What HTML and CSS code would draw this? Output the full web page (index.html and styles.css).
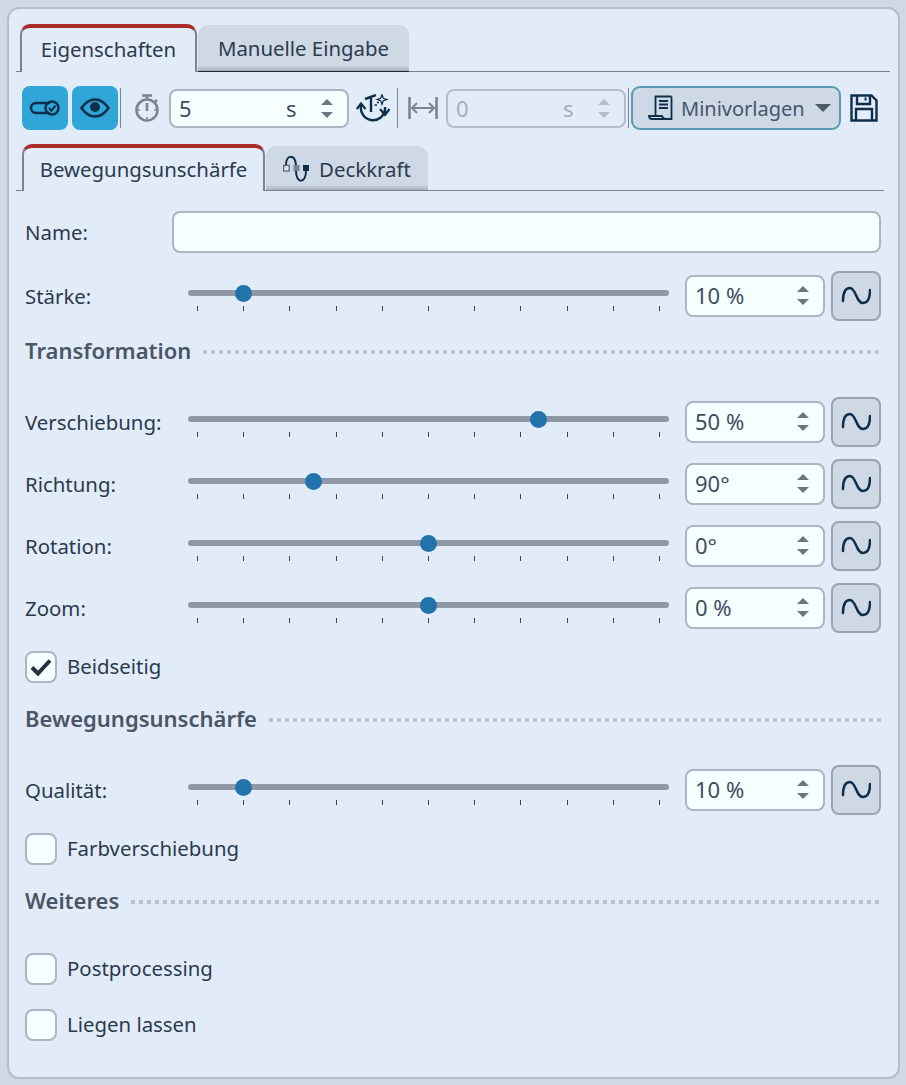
FILE: index.html
```html
<!DOCTYPE html>
<html lang="de">
<head>
<meta charset="utf-8">
<title>Eigenschaften</title>
<link rel="stylesheet" href="styles.css">
</head>
<body>
<main class="panel">
  <div class="tabbar main-tabs">
    <div class="tab active">Eigenschaften</div>
    <div class="tab second">Manuelle Eingabe</div>
  </div>

  <div class="toolbar">
    <button class="tool blue"><svg width="34" height="20" viewBox="0 0 34 20" fill="none" stroke="#0d2f4b" stroke-width="2.4"><path d="M22 5H8a5 5 0 0 0 0 10h14"/><circle cx="24" cy="10" r="6.5"/><path d="M21 10l2.4 2.6 4-5" stroke-width="2"/></svg></button>
    <button class="tool blue"><svg width="30" height="20" viewBox="0 0 30 20"><path d="M1.5 10C6 3.5 10 1.5 15 1.5S24 3.5 28.500 10C24 16.500 20 18.500 15 18.500S6 16.500 1.500 10Z" fill="none" stroke="#0d2f4b" stroke-width="2.600"/><circle cx="15" cy="9" r="5" fill="#0d2f4b"/></svg></button>
    <span class="sep first"></span>
    <svg class="ic watch" width="26" height="28" viewBox="0 0 26 28" fill="none" stroke="#7b848d" stroke-width="2.600"><path d="M8 1.500h10M13 1.500v4M21 6l2 2"/><circle cx="13" cy="16" r="10.500"/><path d="M13 9v8" stroke-width="2.600"/><path d="M13 23v2M4 16h2M20 16h2" stroke-width="1.600"/></svg>
    <div class="spin tool-spin"><span class="val">5</span><span class="unit">s</span><span class="arrows"><i class="up"></i><i class="down"></i></span></div>
    <svg class="ic smart" width="34" height="28" viewBox="0 0 34 28" fill="none" stroke="#0d2f4b" stroke-width="2.400"><path d="M5 12A12 12 0 0 0 29 16"/><path d="M.8 15L5 9.500 9.500 15M24 15l5 6 4.500-6" stroke-width="2.200"/><path d="M5 9.500V12M29 13v8M9 5l11-4M15 3v15"/><path d="M26 .5l1.300 3.700 3.700 1.300-3.700 1.300L26 10.500l-1.300-3.700-3.700-1.300 3.700-1.300z" stroke-width="1.200"/><path d="M18.500 11h2.500M21 8.500h2" stroke-width="1.400"/></svg>
    <span class="sep second-sep"></span>
    <svg class="ic stretch" width="30" height="24" viewBox="0 0 30 24" fill="none" stroke="#7b848d" stroke-width="2"><path d="M1.500 1v22M28.500 1v22" stroke-width="2.600"/><path d="M4 12h22M9 7l-5 5 5 5M21 7l5 5-5 5"/></svg>
    <div class="spin tool-spin disabled"><span class="val">0</span><span class="unit">s</span><span class="arrows"><i class="up"></i><i class="down"></i></span></div>
    <span class="sep third-sep"></span>
    <button class="mini">
      <svg width="26" height="26" viewBox="0 0 26 26" fill="none" stroke="#0d2f4b" stroke-width="1.800"><path d="M23.500 1.500H7.500V20M23.500 1.500V24H18"/><path d="M11 6h9M11 9.500h9M11 13h9" stroke-width="2"/><path d="M1 21h13c.5 2 1.500 3 4 3H4c-2 0-3-1-3-3Z"/></svg>
      <span>Minivorlagen</span><i class="caret"></i>
    </button>
    <svg class="ic save" width="28" height="28" viewBox="0 0 28 28" fill="none" stroke="#0d2f4b" stroke-width="2.400"><path d="M1.500 1.500h20l5 5v20h-25z"/><path d="M7 1.500V10h13V1.500M6 26.500V15h16v11.500"/><path d="M15.500 3.500v3" stroke-width="2"/></svg>
  </div>

  <div class="tabbar sub-tabs">
    <div class="tab active">Bewegungsunschärfe</div>
    <div class="tab second"><svg width="27" height="28" viewBox="0 0 27 28" fill="none" stroke="#0d2f4b" stroke-width="2"><path d="M3 10C3-1 12-1 13 10v6c0 13 10 13 10 0"/><rect x=".7" y="10.500" width="5.500" height="5.500" fill="#e2ecf9" stroke="#5c6670" stroke-width="1.300"/><rect x="10.500" y="10" width="6" height="6" fill="#7b848d" stroke="none"/><rect x="20" y="10" width="6" height="6" fill="#0d2f4b" stroke="none"/></svg>Deckkraft</div>
  </div>

  <div class="row name-row"><label class="label">Name:</label><div class="text-input"></div></div>

  <div class="row slider-row first-slider">
    <label class="label">Stärke:</label>
    <div class="slider"><div class="track"><span class="thumb" style="left:11.6%"></span></div><div class="ticks"><i></i><i></i><i></i><i></i><i></i><i></i><i></i><i></i><i></i><i></i><i></i></div></div>
    <div class="spin"><span class="val">10 %</span><span class="arrows"><i class="up"></i><i class="down"></i></span></div>
    <button class="curve"><svg width="30" height="20" viewBox="0 0 30 20" fill="none" stroke="#0d2f4b" stroke-width="2.500" stroke-linecap="round"><path d="M2 15C2 6 5 2 9 2c6 0 6 15 13 15 4 0 7-4 7-13"/></svg></button>
  </div>

  <div class="heading h-trans"><span>Transformation</span><em></em></div>

  <div class="row slider-row after-heading">
    <label class="label">Verschiebung:</label>
    <div class="slider"><div class="track"><span class="thumb" style="left:72.8%"></span></div><div class="ticks"><i></i><i></i><i></i><i></i><i></i><i></i><i></i><i></i><i></i><i></i><i></i></div></div>
    <div class="spin"><span class="val">50 %</span><span class="arrows"><i class="up"></i><i class="down"></i></span></div>
    <button class="curve"><svg width="30" height="20" viewBox="0 0 30 20" fill="none" stroke="#0d2f4b" stroke-width="2.500" stroke-linecap="round"><path d="M2 15C2 6 5 2 9 2c6 0 6 15 13 15 4 0 7-4 7-13"/></svg></button>
  </div>
  <div class="row slider-row">
    <label class="label">Richtung:</label>
    <div class="slider"><div class="track"><span class="thumb" style="left:26%"></span></div><div class="ticks"><i></i><i></i><i></i><i></i><i></i><i></i><i></i><i></i><i></i><i></i><i></i></div></div>
    <div class="spin"><span class="val">90°</span><span class="arrows"><i class="up"></i><i class="down"></i></span></div>
    <button class="curve"><svg width="30" height="20" viewBox="0 0 30 20" fill="none" stroke="#0d2f4b" stroke-width="2.500" stroke-linecap="round"><path d="M2 15C2 6 5 2 9 2c6 0 6 15 13 15 4 0 7-4 7-13"/></svg></button>
  </div>
  <div class="row slider-row">
    <label class="label">Rotation:</label>
    <div class="slider"><div class="track"><span class="thumb" style="left:50.1%"></span></div><div class="ticks"><i></i><i></i><i></i><i></i><i></i><i></i><i></i><i></i><i></i><i></i><i></i></div></div>
    <div class="spin"><span class="val">0°</span><span class="arrows"><i class="up"></i><i class="down"></i></span></div>
    <button class="curve"><svg width="30" height="20" viewBox="0 0 30 20" fill="none" stroke="#0d2f4b" stroke-width="2.500" stroke-linecap="round"><path d="M2 15C2 6 5 2 9 2c6 0 6 15 13 15 4 0 7-4 7-13"/></svg></button>
  </div>
  <div class="row slider-row">
    <label class="label">Zoom:</label>
    <div class="slider"><div class="track"><span class="thumb" style="left:50.1%"></span></div><div class="ticks"><i></i><i></i><i></i><i></i><i></i><i></i><i></i><i></i><i></i><i></i><i></i></div></div>
    <div class="spin"><span class="val">0 %</span><span class="arrows"><i class="up"></i><i class="down"></i></span></div>
    <button class="curve"><svg width="30" height="20" viewBox="0 0 30 20" fill="none" stroke="#0d2f4b" stroke-width="2.500" stroke-linecap="round"><path d="M2 15C2 6 5 2 9 2c6 0 6 15 13 15 4 0 7-4 7-13"/></svg></button>
  </div>

  <div class="check c-beid"><span class="box"><svg width="22" height="18" viewBox="0 0 22 18" fill="none" stroke="#26303d" stroke-width="4"><path d="M2 9.500l6 6L20 2.500"/></svg></span><span class="check-text">Beidseitig</span></div>

  <div class="heading h-bew"><span>Bewegungsunschärfe</span><em></em></div>

  <div class="row slider-row after-heading">
    <label class="label">Qualität:</label>
    <div class="slider"><div class="track"><span class="thumb" style="left:11.6%"></span></div><div class="ticks"><i></i><i></i><i></i><i></i><i></i><i></i><i></i><i></i><i></i><i></i><i></i></div></div>
    <div class="spin"><span class="val">10 %</span><span class="arrows"><i class="up"></i><i class="down"></i></span></div>
    <button class="curve"><svg width="30" height="20" viewBox="0 0 30 20" fill="none" stroke="#0d2f4b" stroke-width="2.500" stroke-linecap="round"><path d="M2 15C2 6 5 2 9 2c6 0 6 15 13 15 4 0 7-4 7-13"/></svg></button>
  </div>

  <div class="check c-farb"><span class="box"></span><span class="check-text">Farbverschiebung</span></div>

  <div class="heading h-wei"><span>Weiteres</span><em></em></div>

  <div class="check c-post"><span class="box"></span><span class="check-text">Postprocessing</span></div>
  <div class="check c-lieg"><span class="box"></span><span class="check-text">Liegen lassen</span></div>
</main>
</body>
</html>
```

FILE: styles.css
```css
* { box-sizing: border-box; }
html, body { margin: 0; height: 100%; }
body {
  background: #cfd9e5;
  padding: 7px;
  font-family: "Noto Sans", "Open Sans", sans-serif;
  font-size: 20.4px;
  color: #2b3a4e;
  width: 906px;
  height: 1085px;
  overflow: hidden;
}
button { font: inherit; color: inherit; padding: 0; }
.panel {
  width: 893px;
  height: 1072px;
  background: #e2ecf9;
  border: 2px solid #b5bfcb;
  border-radius: 12px;
  padding: 15px 8px 0 7px;
  display: flex;
  flex-direction: column;
}
.tabbar {
  display: flex;
  align-items: flex-end;
  border-bottom: 1px solid #7b8591;
}
.main-tabs { height: 48px; padding-left: 4px; }
.sub-tabs { height: 47px; margin: 14px 6px 0 0; padding-left: 6px; }
.tab {
  display: flex;
  align-items: center;
  justify-content: center;
  border-radius: 10px 10px 0 0;
  white-space: nowrap;
  margin-bottom: -1px;
}
.tab.active {
  background: #e2ecf9;
  border: 2px solid #7b8591;
  border-top: 4px solid #ad2b2b;
  border-bottom: 0;
}
.tab.second {
  background: linear-gradient(#cfd9e5 88%, #a6b0bc 100%);
  border-bottom: 1px solid #1d2833;
  margin-left: 1px;
}
.main-tabs .active { width: 177px; height: 48px; padding-bottom: 3px; }
.main-tabs .second { width: 211px; height: 47px; }
.sub-tabs .active { width: 243px; height: 47px; padding-bottom: 1px; }
.sub-tabs .second { width: 162px; height: 45px; padding-top: 2px; gap: 9px; border-bottom-color: #7b8591; }
.toolbar {
  display: flex;
  align-items: center;
  height: 44px;
  margin-top: 14px;
  padding-left: 6px;
}
.tool {
  width: 46px;
  height: 44px;
  border: 0;
  border-radius: 8px;
  display: flex;
  align-items: center;
  justify-content: center;
}
.tool + .tool { margin-left: 4px; }
.blue { background: #2fa5d8; }
.sep { width: 1px; height: 40px; background: #7b8591; flex: none; }
.sep.first { margin: 0 13px 0 2px; }
.ic { flex: none; }
.watch { margin-right: 9px; }
.spin {
  width: 140px;
  height: 42px;
  background: #f6ffff;
  border: 2px solid #acb6c2;
  border-radius: 8px;
  display: flex;
  align-items: center;
  padding: 0 14px 2px 8px;
  flex: none;
  font-size: 22px;
}
.tool-spin { width: 180px; height: 39px; padding-bottom: 0; }
.val { flex: 1; color: #3f4d60; }
.tool-spin .val { flex: 0 0 107px; }
.unit { flex: 1; color: #3f4d60; }
.arrows { display: flex; flex-direction: column; gap: 7px; width: 12px; }
.up, .down { width: 0; height: 0; border-left: 6px solid transparent; border-right: 6px solid transparent; }
.up { border-bottom: 6px solid #6d7680; }
.down { border-top: 6px solid #6d7680; }
.smart { margin-left: 7px; }
.second-sep { margin: 0 10px 0 7px; }
.stretch { margin-right: 8px; }
.disabled { background: transparent; border-color: #b3bdc9; }
.disabled .val, .disabled .unit { color: #a3adb9; }
.disabled .up { border-bottom-color: #b3bdc9; }
.disabled .down { border-top-color: #b3bdc9; }
.third-sep { margin: 0 2px; }
.mini {
  width: 210px;
  height: 44px;
  flex: none;
  background: #cfd9e5;
  border: 2px solid #5d97b5;
  border-radius: 9px;
  display: flex;
  align-items: center;
  padding-left: 15px;
  color: #44566c;
  font-size: 20px;
}
.mini span { margin-left: 7px; }
.caret { margin-left: 10px; width: 0; height: 0; border-left: 8px solid transparent; border-right: 8px solid transparent; border-top: 8px solid #4e5966; }
.save { margin-left: 9px; }
.row { display: flex; align-items: center; }
.label { padding-left: 9px; flex: none; color: #2b3a4e; }
.name-row { margin-top: 20px; height: 42px; }
.name-row .label { width: 156px; }
.text-input {
  width: 709px;
  height: 42px;
  background: #f6ffff;
  border: 2px solid #acb6c2;
  border-radius: 8px;
}
.slider-row { height: 50px; margin-top: 12px; }
.slider-row .label { width: 172px; }
.first-slider { margin-top: 18px; }
.slider { width: 481px; flex: none; margin-right: 16px; align-self: flex-start; padding-top: 19px; }
.track { position: relative; height: 6px; background: #8f99a6; border-radius: 3px; }
.thumb {
  position: absolute;
  top: 50%;
  width: 17px;
  height: 17px;
  margin: -8.5px 0 0 -8.5px;
  border-radius: 50%;
  background: #2272ab;
}
.ticks { display: flex; justify-content: space-between; padding: 10px 9px 0; }
.ticks i { width: 1px; height: 5px; background: #3a4450; }
.curve {
  width: 50px;
  height: 50px;
  margin-left: 6px;
  background: #cfd9e5;
  border: 2px solid #99a3af;
  border-radius: 8px;
  display: flex;
  align-items: center;
  justify-content: center;
}
.heading {
  display: flex;
  align-items: center;
  gap: 12px;
  padding-left: 9px;
  margin-right: 9px;
  height: 28px;
  font-size: 22px;
  font-weight: 600;
  color: #4a5666;
}
.heading span { margin-top: -2px; }
.heading em {
  flex: 1;
  height: 4px;
  margin-top: 2px;
  background-image: repeating-linear-gradient(90deg, #b9c3cf 0 4px, transparent 4px 8px);
}
.h-trans { margin-top: 16px; margin-right: 12px; }
.after-heading { margin-top: 32px; }
.check { display: flex; align-items: center; gap: 10px; height: 32px; padding-left: 9px; }
.check-text { margin-top: -2px; }
.box {
  width: 32px;
  height: 32px;
  background: #f6ffff;
  border: 2px solid #acb6c2;
  border-radius: 8px;
  display: flex;
  align-items: center;
  justify-content: center;
}
.c-beid { margin-top: 18px; }
.h-bew { margin-top: 22px; }
.c-farb { margin-top: 18px; }
.h-wei { margin-top: 22px; }
.c-post { margin-top: 38px; }
.c-lieg { margin-top: 24px; }
```
